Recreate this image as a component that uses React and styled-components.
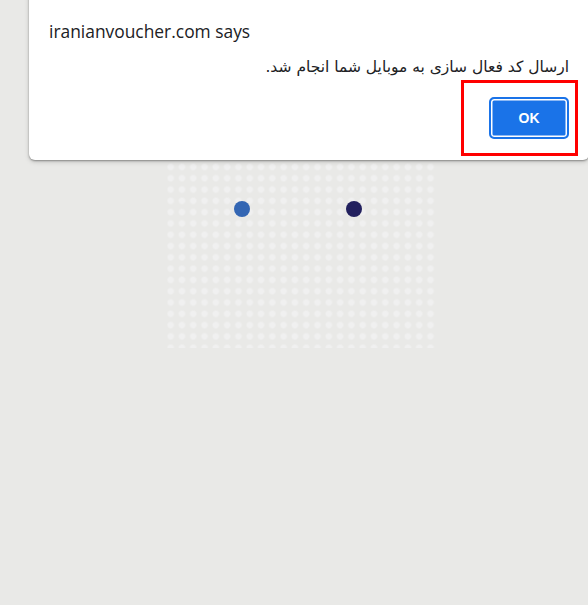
import React from 'react';
import styled, { createGlobalStyle } from 'styled-components';

const GlobalStyle = createGlobalStyle`
  html, body {
    margin: 0;
    padding: 0;
    background: #e9e9e7;
    height: 100%;
  }
  body {
    font-family: "Noto Sans", "DejaVu Sans", sans-serif;
    overflow: hidden;
  }
`;

const Page = styled.div`
  position: relative;
  width: 588px;
  height: 605px;
  background: #e9e9e7;
`;

const Loader = styled.div`
  margin-left: 165px;
  padding-top: 150px;
  width: 270px;
`;

const DotGrid = styled.div`
  position: relative;
  height: 198px;
  background-image: radial-gradient(circle, #f0f0f0 2.4px, rgba(240, 240, 240, 0) 4px);
  background-size: 11.3px 11.3px;
  background-position: 0 0;
`;

const Ball = styled.span`
  position: absolute;
  top: ${(p) => p.$top}px;
  left: ${(p) => p.$left}px;
  width: 16px;
  height: 16px;
  border-radius: 50%;
  background: ${(p) => p.$color};
`;

const Dialog = styled.div`
  position: absolute;
  top: -10px;
  left: 29px;
  width: 560px;
  height: 170px;
  background: #fff;
  border-radius: 0 0 6px 6px;
  box-shadow: 0 1px 2px rgba(0, 0, 0, 0.35), 0 2px 5px rgba(0, 0, 0, 0.15);
  box-sizing: border-box;
  padding: 29px 20px 0 20px;
  display: flex;
  flex-direction: column;
`;

const Title = styled.div`
  font-family: "Open Sans", "Noto Sans", sans-serif;
  font-size: 17.4px;
  color: #202124;
  line-height: 24px;
`;

const Message = styled.div`
  direction: rtl;
  text-align: right;
  font-family: "DejaVu Sans", sans-serif;
  font-size: 15.5px;
  color: #202124;
  margin-top: 13px;
  line-height: 22px;
`;

const Actions = styled.div`
  display: flex;
  justify-content: flex-end;
  margin-top: 2px;
`;

const Highlight = styled.div`
  border: 3px solid #ff0000;
  padding: 14px 6px 14px 25px;
  margin-right: -9px;
`;

const OkButton = styled.button`
  width: 80px;
  height: 42px;
  background: #1a73e8;
  color: #fff;
  font-family: "Liberation Sans", Arial, sans-serif;
  font-weight: 700;
  font-size: 14px;
  border: 2px solid #1a73e8;
  border-radius: 5px;
  box-shadow: inset 0 0 0 1.5px #fff;
  padding: 0;
  cursor: pointer;
`;

export default function App() {
  return (
    <Page>
      <GlobalStyle />
      <Loader>
        <DotGrid>
          <Ball $top={51} $left={69} $color="#3366b3" />
          <Ball $top={51} $left={181} $color="#22205e" />
        </DotGrid>
      </Loader>
      <Dialog>
        <Title>iranianvoucher.com says</Title>
        <Message>ارسال کد فعال سازی به موبایل شما انجام شد.</Message>
        <Actions>
          <Highlight>
            <OkButton>OK</OkButton>
          </Highlight>
        </Actions>
      </Dialog>
    </Page>
  );
}
